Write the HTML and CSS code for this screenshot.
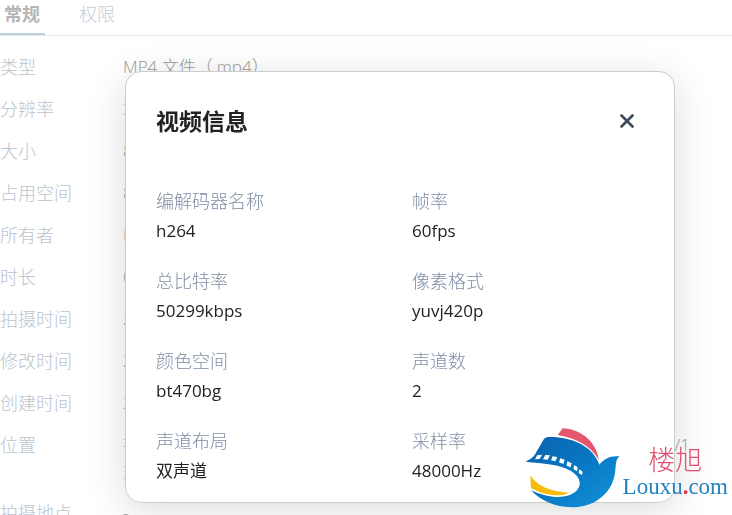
FILE: index.html
```html
<!DOCTYPE html>
<html lang="zh-CN">

<head>
    <meta charset="UTF-8">
    <meta name="viewport" content="width=device-width, initial-scale=1.0">
    <title>视频信息</title>
    <link rel="stylesheet" href="styles.css">
</head>

<body>
    <!-- File properties -->
    <main class="properties">
        <nav class="tabs">
            <a class="tab active" href="#">常规</a>
            <a class="tab" href="#">权限</a>
        </nav>

        <dl class="property-list">
            <dt>类型</dt>
            <dd>MP4 文件（.mp4）</dd>
            <dt>分辨率</dt>
            <dd>3</dd>
            <dt>大小</dt>
            <dd>8</dd>
            <dt>占用空间</dt>
            <dd>8</dd>
            <dt>所有者</dt>
            <dd>H</dd>
            <dt>时长</dt>
            <dd>0</dd>
            <dt>拍摄时间</dt>
            <dd>2</dd>
            <dt>修改时间</dt>
            <dd>2</dd>
            <dt>创建时间</dt>
            <dd>2</dd>
            <dt>位置</dt>
            <dd>
                <div class="path"><span>在</span><span>/1</span></div>
                <a class="copy-link" href="#">复</a>
            </dd>
            <dt>拍摄地点</dt>
            <dd>-</dd>
        </dl>
    </main>

    <!-- Video info dialog -->
    <div class="overlay">
        <section class="modal" role="dialog" aria-labelledby="modalTitle">
            <header class="modal-header">
                <h2 id="modalTitle">视频信息</h2>
                <button class="close-btn" type="button" aria-label="关闭">
                    <svg viewBox="0 0 14 14" width="14" height="14">
                        <path d="M1.5 1.5L12.5 12.5M12.5 1.5L1.5 12.5" />
                    </svg>
                </button>
            </header>

            <dl class="info-grid">
                <div class="info-item">
                    <dt>编解码器名称</dt>
                    <dd>h264</dd>
                </div>
                <div class="info-item">
                    <dt>帧率</dt>
                    <dd>60fps</dd>
                </div>
                <div class="info-item">
                    <dt>总比特率</dt>
                    <dd>50299kbps</dd>
                </div>
                <div class="info-item">
                    <dt>像素格式</dt>
                    <dd>yuvj420p</dd>
                </div>
                <div class="info-item">
                    <dt>颜色空间</dt>
                    <dd>bt470bg</dd>
                </div>
                <div class="info-item">
                    <dt>声道数</dt>
                    <dd>2</dd>
                </div>
                <div class="info-item">
                    <dt>声道布局</dt>
                    <dd>双声道</dd>
                </div>
                <div class="info-item">
                    <dt>采样率</dt>
                    <dd>48000Hz</dd>
                </div>
            </dl>
        </section>
    </div>

    <!-- Site watermark -->
    <div class="watermark">
        <svg class="bird" viewBox="0 0 309 285" width="103" height="95">
            <defs>
                <linearGradient id="birdBlue" x1="0" y1="0" x2="1" y2="1">
                    <stop offset="0" stop-color="#0b62ab" />
                    <stop offset="0.5" stop-color="#0878c4" />
                    <stop offset="1" stop-color="#1495dc" />
                </linearGradient>
            </defs>
            <path fill="#e4576f" d="M128 25C180 27 228 62 237 120C210 76 170 55 113 45Z" />
            <path fill="#fff" d="M31 167C45 135 85 125 120 140C157 149 180 169 179 188C176 214 149 230 122 230C78 230 37 215 31 167Z" />
            <path fill="url(#birdBlue)"
                d="M86 51C150 49 219 76 238 134C252 116 272 106 299 109C284 119 289 143 284 164C274 222 221 262 155 262C104 261 62 242 33 211C72 229 108 235 134 229C165 223 181 206 179 186C176 160 141 141 96 134C66 129 43 128 17 125C29 118 39 113 44 105L70 60C73 54 78 51 86 51Z" />
            <path fill="#f8bd0c" d="M31 166C52 200 92 214 147 218C120 232 74 227 33 205Z" />
            <path fill="#fff"
                d="M52 105L66 104L59 117L45 118ZM76 105L90 106L83 119L69 118ZM98 109L112 111L106 124L93 121ZM121 115L134 119L130 132L117 127ZM142 124L155 130L152 142L140 137ZM162 135L173 142L171 154L161 148ZM178 148L188 155L186 165L176 159Z" />
        </svg>
        <div class="brand">
            <span class="brand-name">楼旭</span>
            <span class="brand-url">Louxu<b>.</b>com</span>
        </div>
    </div>
</body>

</html>
```
FILE: styles.css
```css
/* General Styles */
* {
    box-sizing: border-box;
}

body {
    margin: 0;
    height: 100vh;
    overflow: hidden;
    background: #fff;
    color: #222;
    font-family: 'Open Sans', 'Noto Sans CJK SC', sans-serif;
    font-size: 17px;
}

dl,
dd,
h2 {
    margin: 0;
}

a {
    text-decoration: none;
}

/* Tabs */
.tabs {
    display: flex;
    gap: 34px;
    height: 36px;
    border-bottom: 1px solid #e6eaef;
}

.tab {
    height: 35px;
    line-height: 28px;
    font-size: 18px;
    font-weight: 300;
    color: #c6cdd6;
}

.tab.active {
    padding: 0 5px 0 4px;
    border-bottom: 2px solid #b6d0de;
    font-weight: 700;
    color: #b5b5b5;
}

/* Property list */
.property-list {
    display: grid;
    grid-template-columns: 123px 1fr;
    row-gap: 16px;
    padding: 18px 42px 0 0;
    font-weight: 300;
    line-height: 26px;
    color: #999;
}

.property-list dt {
    font-size: 18px;
    color: #bcc4ce;
}

.path {
    display: flex;
    justify-content: space-between;
}

.copy-link {
    color: #7fb2d6;
}

/* Dialog */
.overlay {
    position: fixed;
    inset: 0;
    display: flex;
    padding: 71px 57px 12px 125px;
}

.modal {
    flex: 1;
    padding: 30px;
    background: #fff;
    border: 1px solid #ccc;
    border-radius: 16px;
    box-shadow: 0 8px 40px rgba(0, 0, 0, 0.14);
}

.modal-header {
    display: flex;
    align-items: center;
    justify-content: space-between;
    height: 38px;
    padding-right: 2px;
}

.modal-header h2 {
    font-size: 23px;
    line-height: 38px;
    font-weight: 700;
}

.close-btn {
    display: flex;
    align-items: center;
    justify-content: center;
    width: 30px;
    height: 30px;
    padding: 0;
    border: none;
    background: none;
    cursor: pointer;
}

.close-btn path {
    fill: none;
    stroke: #3b4a59;
    stroke-width: 2.6;
    stroke-linecap: round;
}

.info-grid {
    display: grid;
    grid-template-columns: 1fr 1fr;
    column-gap: 24px;
    row-gap: 20px;
    padding-top: 46px;
}

.info-item {
    line-height: 30px;
}

.info-item dt {
    font-size: 18px;
    color: #7d8ea5;
    font-weight: 300;
}

/* Watermark */
.watermark {
    position: fixed;
    right: 4px;
    bottom: 0;
    display: flex;
    align-items: flex-end;
}

.brand {
    display: flex;
    flex-direction: column;
    align-items: center;
    padding-bottom: 15px;
}

.brand-name {
    font-family: 'Noto Sans CJK SC', sans-serif;
    font-size: 27px;
    font-weight: 300;
    line-height: 30px;
    color: #e0506f;
}

.brand-url {
    font-family: 'Liberation Serif', serif;
    font-size: 23px;
    line-height: 26px;
    color: #2282c0;
}

.brand-url b {
    color: #e0304f;
}
```
